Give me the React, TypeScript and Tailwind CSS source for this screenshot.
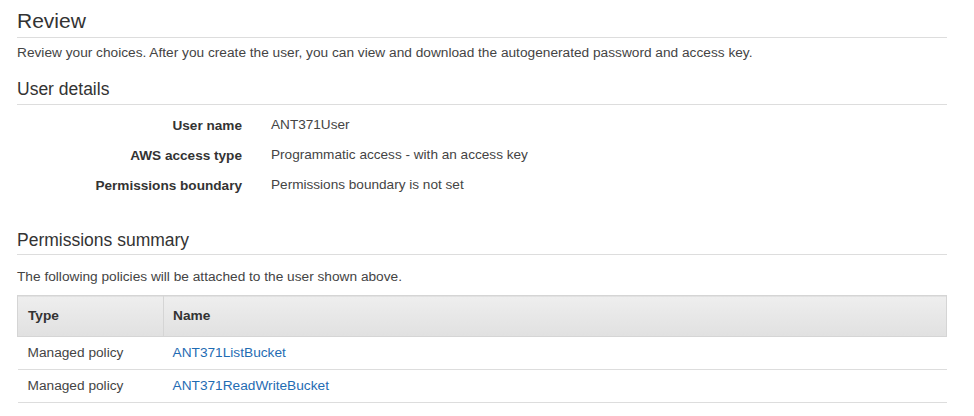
export default function App() {
  const details = [
    { label: "User name", value: "ANT371User" },
    { label: "AWS access type", value: "Programmatic access - with an access key" },
    { label: "Permissions boundary", value: "Permissions boundary is not set" },
  ];
  const policies = ["ANT371ListBucket", "ANT371ReadWriteBucket"];

  return (
    <div className="bg-white px-[17px] pt-[8px] text-[#444] [font-family:'Liberation_Sans',Arial,sans-serif] w-[964px]">
      {/* Review */}
      <h1 className="text-[21px] leading-[25px] text-[#333] pb-[4px] border-b border-[#ddd]">Review</h1>
      <p className="text-[13.7px] leading-[18px] mt-[6px]">
        Review your choices. After you create the user, you can view and download the autogenerated password and access key.
      </p>

      {/* User details */}
      <h2 className="text-[17.5px] leading-[22px] text-[#333] mt-[16px] pb-[4px] border-b border-[#ddd]">User details</h2>
      <div className="mt-[5px] flex flex-col">
        {details.map((d) => (
          <div key={d.label} className="flex items-center h-[30px] text-[13.6px]">
            <div className="w-[225px] text-right font-bold text-[#333] pt-[2px]">{d.label}</div>
            <div className="pl-[29px]">{d.value}</div>
          </div>
        ))}
      </div>

      {/* Permissions summary */}
      <h2 className="text-[17.5px] leading-[22px] text-[#333] mt-[29px] pb-[3px] border-b border-[#ddd]">
        Permissions summary
      </h2>
      <p className="text-[13.7px] leading-[18px] mt-[13px]">The following policies will be attached to the user shown above.</p>

      <table className="mt-[9px] w-full border-collapse text-[13.7px]">
        <thead>
          <tr className="bg-gradient-to-b from-[#eeeeee] to-[#e1e1e1] border border-[#d5d5d5]">
            <th className="w-[146px] h-[41px] text-left font-bold text-[#333] pl-[10px] border-r border-[#d5d5d5]">Type</th>
            <th className="text-left font-bold text-[#333] pl-[9px]">Name</th>
          </tr>
        </thead>
        <tbody>
          {policies.map((p) => (
            <tr key={p} className="border-b border-[#ddd]">
              <td className="h-[33px] pl-[10px]">Managed policy</td>
              <td className="pl-[9px]">
                <a href="#" className="text-[#1f6cb3]">
                  {p}
                </a>
              </td>
            </tr>
          ))}
        </tbody>
      </table>
    </div>
  );
}
